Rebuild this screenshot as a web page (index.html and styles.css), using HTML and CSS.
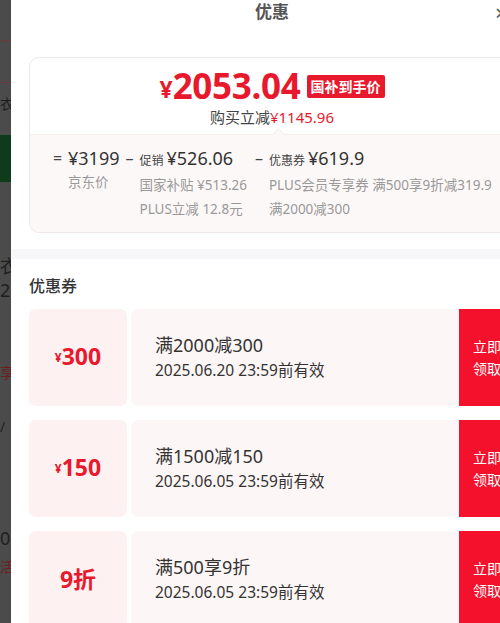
FILE: index.html
```html
<!DOCTYPE html>
<html>
    <head>
        <title>优惠</title>
        <meta charset="UTF-8">
        <meta name="viewport" content="width=device-width, initial-scale=1.0">
        <link rel="stylesheet" href="styles.css">
    </head>
    <body>
        <div class="page">
            <!-- page behind the sheet, dimmed -->
            <aside class="behind">
                <div class="bh-line"></div>
                <div class="bh-line second"></div>
                <div class="bh-text">衣</div>
                <div class="bh-green"></div>
                <div class="bh-big">衣<br>2</div>
                <div class="bh-red">享</div>
                <div class="bh-text low">/</div>
                <div class="bh-big low">0</div>
                <div class="bh-red low">活</div>
            </aside>

            <section class="sheet">
                <header class="sheet-head">
                    <span></span>
                    <h2>优惠</h2>
                    <span class="close">×</span>
                </header>

                <div class="price-card">
                    <div class="price-top">
                        <div class="price-line">
                            <span class="yen">¥</span><span class="amount">2053.04</span>
                            <span class="tag">国补到手价</span>
                        </div>
                        <div class="saved">购买立减<span class="red">¥1145.96</span></div>
                    </div>
                    <div class="price-calc">
                        <div class="calc-col">
                            <span class="op">=</span>
                            <div class="calc-body">
                                <div class="calc-head">¥3199</div>
                                <div class="calc-sub">京东价</div>
                            </div>
                        </div>
                        <div class="calc-col">
                            <span class="op">–</span>
                            <div class="calc-body">
                                <div class="calc-head"><small>促销</small>¥526.06</div>
                                <div class="calc-sub">国家补贴 ¥513.26</div>
                                <div class="calc-sub">PLUS立减 12.8元</div>
                            </div>
                        </div>
                        <div class="calc-col">
                            <span class="op">–</span>
                            <div class="calc-body">
                                <div class="calc-head"><small>优惠券</small>¥619.9</div>
                                <div class="calc-sub">PLUS会员专享券 满500享9折减319.9</div>
                                <div class="calc-sub">满2000减300</div>
                            </div>
                        </div>
                    </div>
                </div>

                <div class="band"></div>

                <h3 class="section-title">优惠券</h3>

                <div class="coupon">
                    <div class="stub"><small>¥</small>300</div>
                    <div class="coupon-body">
                        <div class="coupon-title">满2000减300</div>
                        <div class="coupon-date">2025.06.20 23:59前有效</div>
                    </div>
                    <div class="take">立即<br>领取</div>
                </div>
                <div class="coupon">
                    <div class="stub"><small>¥</small>150</div>
                    <div class="coupon-body">
                        <div class="coupon-title">满1500减150</div>
                        <div class="coupon-date">2025.06.05 23:59前有效</div>
                    </div>
                    <div class="take">立即<br>领取</div>
                </div>
                <div class="coupon">
                    <div class="stub">9折</div>
                    <div class="coupon-body">
                        <div class="coupon-title">满500享9折</div>
                        <div class="coupon-date">2025.06.05 23:59前有效</div>
                    </div>
                    <div class="take">立即<br>领取</div>
                </div>
            </section>
        </div>
    </body>
</html>
```

FILE: styles.css
```css
* {
    box-sizing: border-box;
}

body {
    margin: 0;
    background: #4b4b4b;
    overflow: hidden;
    font-family: "Noto Sans", "Noto Sans CJK SC", sans-serif;
    color: #333;
}

.page {
    display: flex;
    height: 623px;
}

/* dimmed page behind the sheet */
.behind {
    width: 11px;
    flex-shrink: 0;
    overflow: hidden;
    color: #1e1e1e;
    font-size: 14px;
}
.bh-line {
    height: 1px;
    background: #6b3b3b;
    margin-top: 40px;
}
.bh-line.second {
    margin-top: 41px;
}
.bh-text {
    margin-top: 12px;
    line-height: 18px;
}
.bh-text.low {
    margin-top: 36px;
}
.bh-green {
    height: 47px;
    margin-top: 22px;
    background: #0d3b1b;
}
.bh-big {
    margin-top: 72px;
    font-size: 18px;
    line-height: 24px;
}
.bh-big.low {
    margin-top: 90px;
}
.bh-red {
    margin-top: 62px;
    color: #6e1d1d;
    line-height: 18px;
}
.bh-red.low {
    margin-top: 8px;
}

/* the sheet */
.sheet {
    width: 522px;
    flex-shrink: 0;
    background: #fff;
}

.sheet-head {
    display: grid;
    grid-template-columns: 40px 1fr 40px;
    align-items: center;
    height: 24px;
}
.sheet-head h2 {
    margin: 0;
    text-align: center;
    font-size: 17px;
    line-height: 24px;
    font-weight: 700;
    color: #555;
}
.close {
    font-size: 22px;
    line-height: 24px;
    color: #555;
    padding-left: 2px;
}

.price-card {
    margin: 33px 18px 0;
    border: 1px solid #f1e6e6;
    border-radius: 10px;
    overflow: hidden;
}

.price-top {
    padding: 10px 0 7px;
    text-align: center;
}
.price-line {
    display: flex;
    justify-content: center;
    align-items: center;
    color: #e8192c;
    height: 36px;
}
.yen {
    font-size: 23px;
    font-weight: 700;
    line-height: 30px;
    margin-top: 6px;
}
.amount {
    font-size: 35px;
    font-weight: 700;
    line-height: 36px;
    letter-spacing: -0.3px;
}
.tag {
    margin-left: 6px;
    background: #e8192c;
    color: #fff;
    font-size: 14px;
    font-weight: 700;
    line-height: 23px;
    padding: 0 4px;
    border-radius: 2px;
}
.saved {
    margin-top: 3px;
    font-size: 15px;
    line-height: 20px;
    color: #444;
}
.red {
    color: #e8192c;
}

.price-calc {
    position: relative;
    display: flex;
    background: #fdf8f8;
    border-top: 1px solid #f6eded;
    padding: 11px 0 11px 23px;
}
.price-calc::before {
    content: "";
    position: absolute;
    top: -5px;
    left: 244px;
    width: 8px;
    height: 8px;
    background: #fdf8f8;
    border-top: 1px solid #f6eded;
    border-left: 1px solid #f6eded;
    transform: rotate(45deg);
}
.calc-col {
    display: flex;
    align-items: flex-start;
    margin-right: 6px;
}
.calc-col + .calc-col {
    margin-right: 8px;
}
.op {
    width: 15px;
    font-size: 16px;
    line-height: 24px;
    color: #444;
}
.calc-col + .calc-col .op {
    width: 14px;
}
.calc-head {
    font-size: 18px;
    line-height: 24px;
    color: #333;
    white-space: nowrap;
}
.calc-head small {
    font-size: 12px;
    margin-right: 3px;
    color: #444;
}
.calc-sub {
    font-size: 13.5px;
    line-height: 24px;
    color: #999;
    white-space: nowrap;
}

.band {
    height: 10px;
    margin-top: 16px;
    background: #f7f7fa;
}

.section-title {
    margin: 16px 18px 12px;
    font-size: 16px;
    line-height: 22px;
    font-weight: 500;
    color: #333;
}

.coupon {
    display: flex;
    height: 97px;
    margin: 0 18px 14px;
}
.stub {
    width: 98px;
    display: flex;
    justify-content: center;
    align-items: center;
    background: #fdf1f2;
    border-radius: 7px;
    color: #e8192c;
    font-size: 23px;
    font-weight: 700;
    padding-bottom: 4px;
}
.stub small {
    font-size: 12px;
    margin-top: 4px;
}
.coupon-body {
    flex: 1;
    margin-left: 4px;
    padding-left: 24px;
    padding-bottom: 3px;
    display: flex;
    flex-direction: column;
    justify-content: center;
    background: #fdf6f6;
    border-radius: 7px 0 0 7px;
}
.coupon-title {
    font-size: 18px;
    line-height: 26px;
    margin-bottom: 1px;
    color: #333;
}
.coupon-date {
    font-size: 15.5px;
    line-height: 22px;
    color: #333;
}
.take {
    width: 56px;
    display: flex;
    align-items: center;
    justify-content: center;
    background: #f4112b;
    color: #fff;
    font-size: 14px;
    line-height: 22px;
    text-align: center;
}
```
